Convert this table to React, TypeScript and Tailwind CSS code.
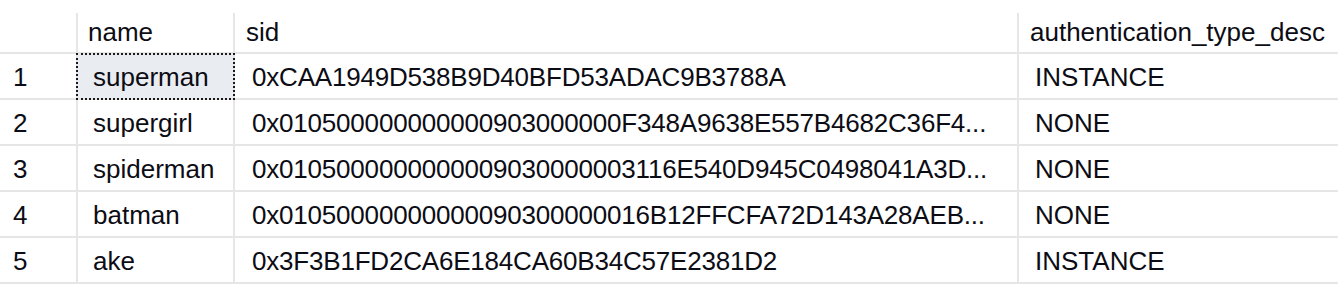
import React from "react";

const rows = [
  { n: "1", name: "superman", sid: "0xCAA1949D538B9D40BFD53ADAC9B3788A", auth: "INSTANCE" },
  { n: "2", name: "supergirl", sid: "0x010500000000000903000000F348A9638E557B4682C36F4...", auth: "NONE" },
  { n: "3", name: "spiderman", sid: "0x0105000000000009030000003116E540D945C0498041A3D...", auth: "NONE" },
  { n: "4", name: "batman", sid: "0x01050000000000090300000016B12FFCFA72D143A28AEB...", auth: "NONE" },
  { n: "5", name: "ake", sid: "0x3F3B1FD2CA6E184CA60B34C57E2381D2", auth: "INSTANCE" },
];

export default function App() {
  return (
    <div className="w-[1338px] h-[286px] bg-white text-[#0c0c14] text-[26px] font-['Liberation_Sans',Arial,sans-serif] overflow-hidden">
      {/* header */}
      <div className="flex h-[54px] border-b-2 border-[#e6e6e6]">
        <div className="w-[76px] shrink-0" />
        <div className="w-[157px] shrink-0 pt-[13px] flex">
          <div className="flex-1 border-l-2 border-[#e6e6e6] pl-[10px] flex items-center">name</div>
        </div>
        <div className="w-[784px] shrink-0 pt-[13px] flex">
          <div className="flex-1 border-l-2 border-[#e6e6e6] pl-[11px] flex items-center">sid</div>
        </div>
        <div className="flex-1 pt-[13px] flex">
          <div className="flex-1 border-l-2 border-[#e6e6e6] pl-[11px] flex items-center">authentication_type_desc</div>
        </div>
      </div>

      {rows.map((r, i) => (
        <div key={r.n} className="flex h-[46px] border-b-2 border-[#e6e6e6]">
          <div className="w-[76px] shrink-0 pl-[13px] pt-[2px] flex items-center">{r.n}</div>
          <div
            className={`w-[157px] shrink-0 border-l-2 border-[#e6e6e6] pl-[15px] pt-[2px] flex items-center relative ${
              i === 0 ? "bg-[#e9edf2]" : ""
            }`}
          >
            {r.name}
            {i === 0 && (
              <div className="absolute left-[-2px] top-[-1px] right-[-2px] bottom-[-2px] border-2 border-dotted border-[#1a1a1a]" />
            )}
          </div>
          <div className="w-[784px] shrink-0 border-l-2 border-[#e6e6e6] pl-[17px] pt-[2px] flex items-center whitespace-nowrap overflow-hidden tracking-[-0.2px]">
            {r.sid}
          </div>
          <div className="flex-1 border-l-2 border-[#e6e6e6] pl-[16px] pt-[2px] flex items-center">{r.auth}</div>
        </div>
      ))}
    </div>
  );
}
